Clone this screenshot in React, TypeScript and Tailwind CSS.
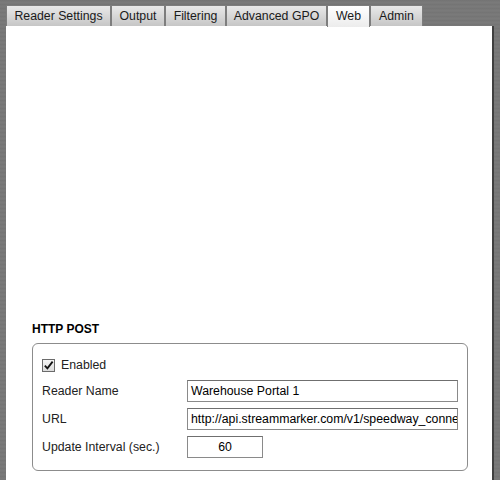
import React from "react";

const tabs = [
  { label: "Reader Settings", w: "w-[105px]" },
  { label: "Output", w: "w-[54px]" },
  { label: "Filtering", w: "w-[61px]" },
  { label: "Advanced GPO", w: "w-[101px]" },
  { label: "Web", w: "w-[43px]", active: true },
  { label: "Admin", w: "w-[53px]" },
];

function Field({ label, value, narrow }: { label: string; value: string; narrow?: boolean }) {
  return (
    <div className="flex items-center h-[22px]">
      <label className="w-[145px] text-[12.3px] text-[#222]">{label}</label>
      <div
        className={`${narrow ? "w-[76px] justify-center" : "w-[271px] pl-[3px]"} h-[22px] flex items-center border border-[#8a8a8a] border-t-[#6f6f6f] bg-white text-[12.3px] text-black overflow-hidden whitespace-nowrap`}
      >
        {value}
      </div>
    </div>
  );
}

export default function App() {
  return (
    <div
      className="w-[500px] h-[480px] overflow-hidden pl-[6px] pt-[5px] bg-[#777] bg-[repeating-linear-gradient(180deg,#7a7a7a_0px,#6f6f6f_1px,#808080_2px,#747474_3px,#7c7c7c_4px)]"
      style={{ fontFamily: '"Liberation Sans", Arial, sans-serif' }}
    >
      {/* Tabs */}
      <div className="flex h-[21px]">
        {tabs.map((t) => (
          <div
            key={t.label}
            className={`${t.w} h-[21px] flex items-center justify-center text-[12.3px] text-[#1a1a1a] border border-b-0 border-[#7d7d7d] ${
              t.active
                ? "bg-linear-to-b from-[#ffffff] to-[#ececec] h-[22px] relative z-10"
                : "bg-linear-to-b from-[#e9e9e9] to-[#c6c6c6]"
            }`}
          >
            {t.label}
          </div>
        ))}
      </div>

      {/* Panel */}
      <div className="w-[488px] h-[460px] bg-white border-r-[2px] border-[#3f3f3f] pl-[26px] pr-[24px] pt-[296px]">
        <h3 className="text-[12px] leading-[14px] font-bold text-black">HTTP POST</h3>

        <div className="mt-[7px] w-[436px] h-[128px] border border-[#8c8c8c] rounded-[6px] pl-[9px] pt-[10px] flex flex-col gap-[6px]">
          <div className="flex items-center h-[22px] -mb-[2px]">
            <span className="w-[13px] h-[13px] border border-[#6b6b6b] bg-linear-to-b from-[#f4f4f4] to-[#dcdcdc] flex items-center justify-center">
              <svg viewBox="0 0 12 12" className="w-[11px] h-[11px]">
                <path d="M2 6.2 L4.8 9.2 L10.5 1.8" fill="none" stroke="#111" strokeWidth="2" />
              </svg>
            </span>
            <span className="ml-[6px] text-[12.3px] text-[#222]">Enabled</span>
          </div>
          <Field label="Reader Name" value="Warehouse Portal 1" />
          <Field label="URL" value="http://api.streammarker.com/v1/speedway_connect" />
          <Field label="Update Interval (sec.)" value="60" narrow />
        </div>
      </div>
    </div>
  );
}
